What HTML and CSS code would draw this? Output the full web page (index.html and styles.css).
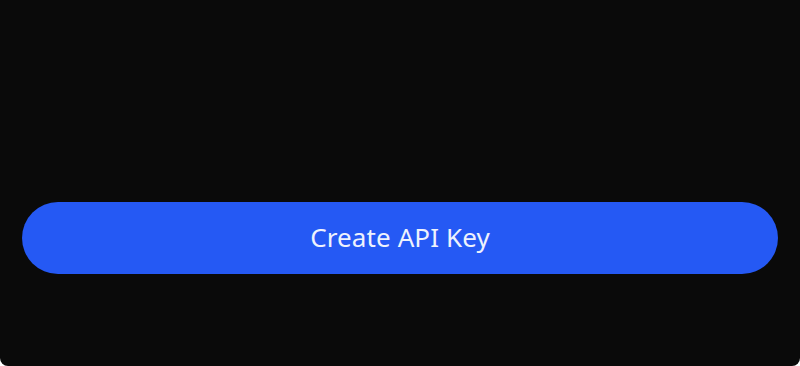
FILE: index.html
```html
<!DOCTYPE html>
<html lang="en">
<head>
    <meta charset="UTF-8">
    <meta name="viewport" content="width=device-width, initial-scale=1.0">
    <title>API Keys</title>
    <link rel="stylesheet" href="styles.css">
</head>
<body>
    <div class="screen">
        <div class="actions">
            <button class="create-btn">Create API Key</button>
        </div>
    </div>
</body>
</html>
```

FILE: styles.css
```css
* {
    margin: 0;
    padding: 0;
    box-sizing: border-box;
    font-family: 'Noto Sans', 'Open Sans', sans-serif;
}

html {
    background: #ffffff;
}

body {
    height: 366px;
    overflow: hidden;
}

.screen {
    height: 100%;
    background: #0a0a0a;
    border-radius: 0 0 8px 8px;
    padding: 202px 22px 0;
}

.actions {
    display: flex;
}

.create-btn {
    flex: 1;
    height: 72px;
    border: none;
    border-radius: 36px;
    background: #2559f4;
    color: #eef2fd;
    font-size: 26px;
    font-weight: 400;
    letter-spacing: 0.1px;
    padding-bottom: 2px;
    cursor: pointer;
}
```
